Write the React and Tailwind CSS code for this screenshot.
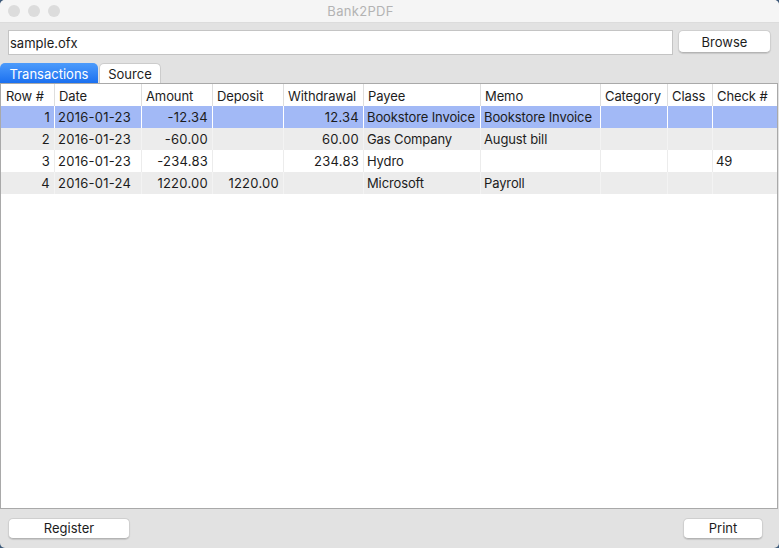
const cols = ["Row #", "Date", "Amount", "Deposit", "Withdrawal", "Payee", "Memo", "Category", "Class", "Check #"];
const widths = [54, 87, 71, 71, 80, 117, 120, 67, 45, 64];
const aligns = [1, 0, 1, 1, 1, 0, 0, 0, 0, 0];
const rows = [
  ["1", "2016-01-23", "-12.34", "", "12.34", "Bookstore Invoice", "Bookstore Invoice", "", "", ""],
  ["2", "2016-01-23", "-60.00", "", "60.00", "Gas Company", "August bill", "", "", ""],
  ["3", "2016-01-23", "-234.83", "", "234.83", "Hydro", "", "", "", "49"],
  ["4", "2016-01-24", "1220.00", "1220.00", "", "Microsoft", "Payroll", "", "", ""],
];
const rowBg = ["bg-[#a2b9f6]", "bg-[#ececec]", "bg-white", "bg-[#ececec]"];
const rowLine = ["border-white", "border-[#f3f3f3]", "border-[#ececec]", "border-[#f3f3f3]"];

function Btn({ className, children }) {
  return (
    <button className={"shrink-0 rounded-[5px] bg-white border border-[#cfcfcf] border-b-[#b4b4b4] shadow-[0_1px_1px_rgba(0,0,0,0.12)] text-[#1c1c1c] text-[13px] leading-none " + className}>
      {children}
    </button>
  );
}

export default function App() {
  return (
    <div className="w-[779px] h-[548px] bg-[#3d5a7a] overflow-hidden">
      <div className="w-full h-full flex flex-col bg-[#e2e2e2] overflow-hidden rounded-[5px] font-['Inter','Liberation_Sans',sans-serif] text-[13px] text-[#1c1c1c]">
        <div className="h-[23px] shrink-0 flex items-center relative bg-[#f5f5f5] border-b border-[#dcdcdc]">
          <div className="flex gap-2 pl-2 items-center">
            <span className="w-3 h-3 rounded-full bg-[#dcdcdc]" />
            <span className="w-3 h-3 rounded-full bg-[#dcdcdc]" />
            <span className="w-3 h-3 rounded-full bg-[#dcdcdc]" />
          </div>
          <div className="absolute inset-0 pr-[58px] pt-[2px] flex items-center justify-center text-[#b3b3b3] text-[13px] tracking-[0.3px]">Bank2PDF</div>
        </div>
        <div className="flex items-start gap-[5px] pl-2 mt-[7px] shrink-0">
          <div className="w-[665px] h-[25px] shrink-0 bg-white border border-[#c4c4c4] flex items-center pl-[1px] pt-[2px]">sample.ofx</div>
          <Btn className="w-[93px] h-[23px] pt-[2px]">Browse</Btn>
        </div>
        <div className="flex h-[20px] mt-[8px] shrink-0 items-end">
          <div className="w-[98px] h-[20px] pt-[3px] rounded-t-[5px] bg-gradient-to-b from-[#4c9bfb] to-[#1a70f0] text-white flex items-center justify-center">Transactions</div>
          <div className="w-[62px] h-[20px] pt-[2px] ml-px rounded-t-[5px] bg-white border border-b-0 border-[#cccccc] flex items-center justify-center">Source</div>
        </div>
        <div className="flex-1 w-[778px] border border-[#a9a9a9] bg-white flex flex-col min-h-0">
          <div className="flex h-[22px] shrink-0 bg-white">
            {cols.map((c, i) => (
              <div key={c} style={{ width: widths[i] }} className="border-r border-[#dedede] last:border-r-0 pl-[4px] first:pl-[5px] pt-[3px] tracking-[-0.1px] flex items-center overflow-hidden whitespace-nowrap">{c}</div>
            ))}
          </div>
          {rows.map((r, ri) => (
            <div key={ri} className={"flex h-[22px] shrink-0 " + rowBg[ri]}>
              {r.map((v, i) => (
                <div key={i} style={{ width: widths[i] }} className={"border-r last:border-r-0 pt-[2px] flex items-center overflow-hidden whitespace-nowrap " + rowLine[ri] + " " + (i < 5 ? "tracking-[0.25px] " : "tracking-[-0.12px] ") + (aligns[i] ? "justify-end pr-[4px]" : "pl-[3px]")}>{v}</div>
              ))}
            </div>
          ))}
        </div>
        <div className="h-[39px] shrink-0 flex items-center justify-between pl-2 pr-4 pb-px">
          <Btn className="w-[122px] h-[21px]">Register</Btn>
          <Btn className="w-[80px] h-[21px]">Print</Btn>
        </div>
      </div>
    </div>
  );
}
